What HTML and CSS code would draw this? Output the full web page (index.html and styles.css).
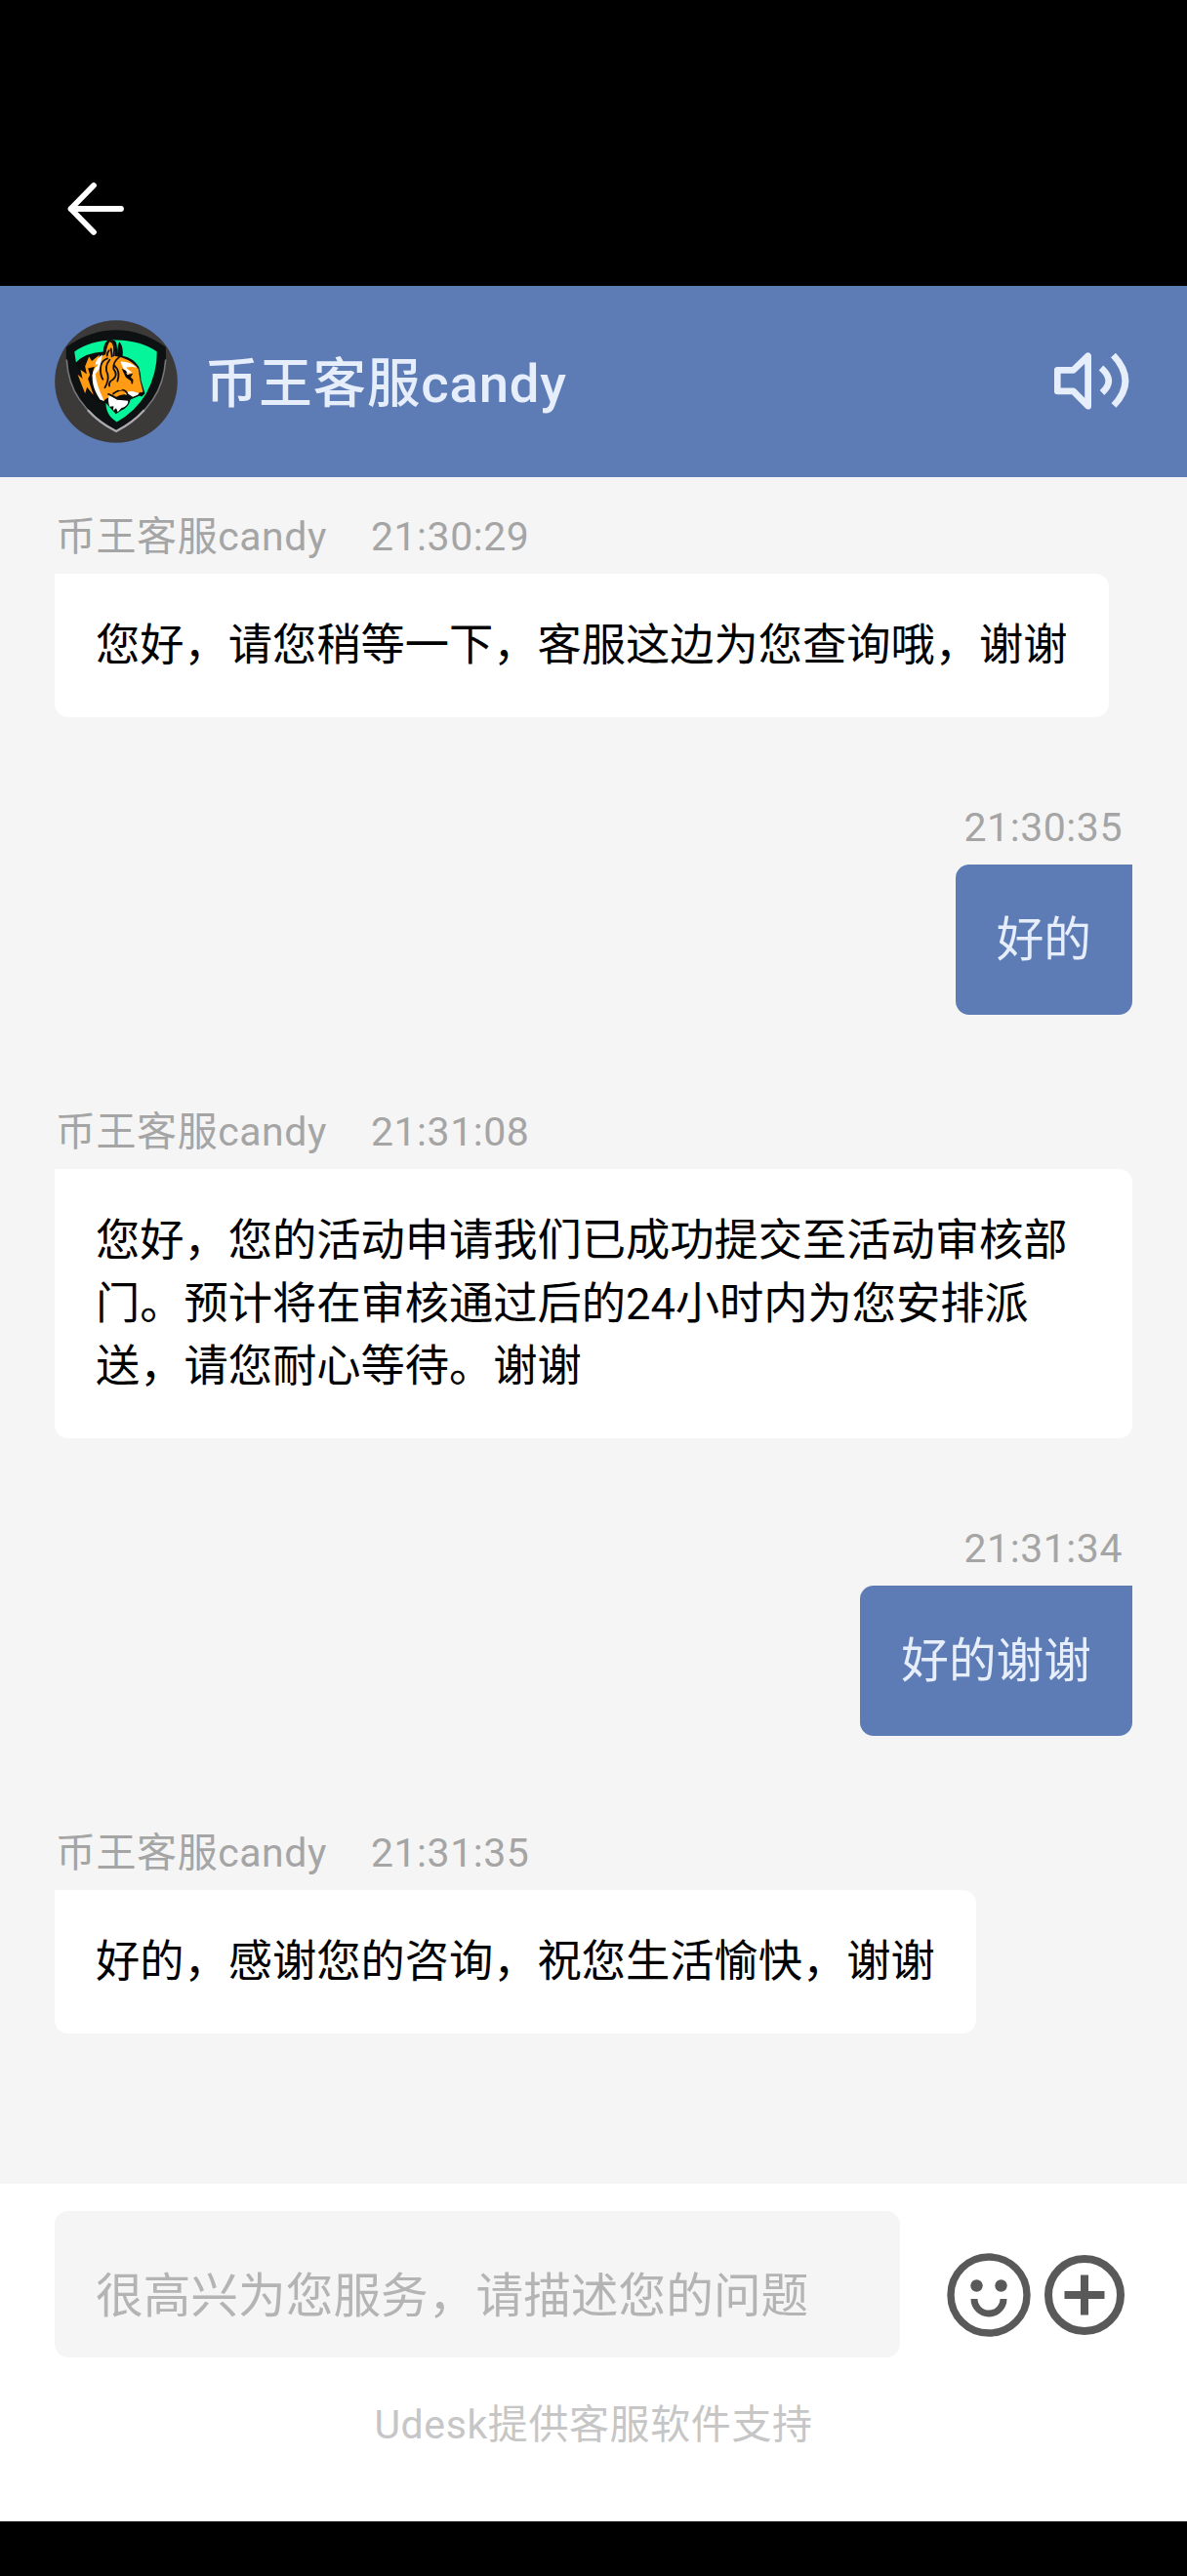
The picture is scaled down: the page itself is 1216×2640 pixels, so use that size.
FILE: index.html
```html
<!DOCTYPE html>
<html lang="zh-CN">
<head>
<meta charset="utf-8">
<title>币王客服candy</title>
<link rel="stylesheet" href="styles.css">
</head>
<body>
<div class="screen">
  <nav class="navbar">
    <svg class="back" viewBox="0 0 64 60" fill="none" stroke="#fff" stroke-width="5.8" stroke-linecap="round" stroke-linejoin="round"><path d="M32 6 8.500 30 32 54M8.500 30H60"/></svg>
  </nav>
  <header class="header">
    <svg class="avatar" viewBox="48 53 380 380">
      <circle cx="238" cy="243" r="189.500" fill="#3b3a39"/>
      <path d="M84 137Q155 84 238 84Q320 84 391 137Q398 225 355 297Q315 360 238 400Q160 360 121 297Q78 225 84 137Z" fill="#0e1112"/>
      <path d="M85 175Q89 247 124 298Q164 358 238 397Q312 358 352 298Q386 247 391 175" fill="none" stroke="#77757a" stroke-width="5"/>
      <path d="M150 331Q184 369 238 397Q291 369 325 331" fill="none" stroke="#aaa8ad" stroke-width="7"/>
      <path d="M109 151Q160 114 238 115Q317 117 364 151Q365 216 331 280Q298 335 240 368Q202 345 207 302L208 200L195 155Q140 158 114 184Z" fill="#05f59a"/>
      <path d="M114 184Q145 153 198 151Q200 118 219 112L235 118Q242 126 241 158Q242 125 249 121Q261 138 258 164Q292 171 308 198Q314 217 315 240L327 280L282 299Q278 323 253 333L237 343L207 310L190 306L160 294Z" fill="#0b0d0d"/>
      <path d="M202 159Q203 125 219 113Q239 123 233 164L256 169Q292 181 307 205Q310 239 321 275L286 292Q265 275 237 291Q212 289 199 303Q176 280 164 224Q171 178 202 159Z" fill="#ff9c13"/>
      <path d="M154 166L163 180L187 160L176 196L151 202L157 222L151 235L168 285L148 260L142 280L119 221L134 234L128 207L147 220L142 196Z" fill="#ff9c13"/>
      <path d="M196 160Q176 170 173 193Q184 185 181 193Q161 208 165 239Q166 264 188 299L201 303Q176 253 174 220Q192 200 190 185Z" fill="#fff"/>
      <path d="M252 181Q280 180 302 200Q284 195 268 200L288 216L276 217Q258 208 252 181ZM265 280Q279 268 300 277L314 281L287 291Z" fill="#fff"/>
      <path d="M216 284L239 298L275 301Q277 319 254 325L243 337L238 325L229 333L230 319L218 321Q211 303 216 284Z" fill="#fff"/>
      <g fill="none" stroke="#101010" stroke-width="5.5" stroke-linecap="round" stroke-linejoin="round">
        <path d="M203 158Q208 123 219 116Q238 126 230 163"/>
        <path d="M211 172Q192 178 190 200Q188 222 197 236M218 176Q200 198 212 221Q216 240 203 262M247 168Q228 182 230 204Q245 222 228 237Q214 244 217 257M234 195Q252 212 242 242M276 227L288 238L287 248M229 281Q263 256 274 284L286 291M214 282Q235 291 242 297L276 300"/>
        <path d="M210 163Q211 151 216 147M222 142L225 166"/>
      </g>
      <path d="M255 203L268 209L275 222L290 218L282 231L289 245L268 230ZM311 276L327 280L317 290L305 284Z" fill="#080808"/>
      <path d="M268 216L277 218L274 223Z" fill="#fff"/>
      <path d="M237 264Q248 257 259 267L249 271Z" fill="#ff9c13"/>
    </svg>
    <h1 class="title">币王客服candy</h1>
    <svg class="sound" viewBox="0 0 80 64" fill="none" stroke="#e6edfb" stroke-width="6.800">
      <path d="M3.200 20.400H19.500L34.600 5.800V57.200L19.500 41.800H3.200Z" stroke-linejoin="round"/>
      <path d="M48 18Q63 31 49 43.500M60.500 5Q85 31 61 56.500"/>
    </svg>
  </header>
  <main class="chat">
    <section class="message agent">
      <div class="meta"><span>币王客服candy</span><time>21:30:29</time></div>
      <p class="bubble">您好，请您稍等一下，客服这边为您查询哦，谢谢</p>
    </section>
    <section class="message me">
      <div class="meta"><time>21:30:35</time></div>
      <p class="bubble">好的</p>
    </section>
    <section class="message agent">
      <div class="meta"><span>币王客服candy</span><time>21:31:08</time></div>
      <p class="bubble wide">您好，您的活动申请我们已成功提交至活动审核部<br>门。预计将在审核通过后的24小时内为您安排派<br>送，请您耐心等待。谢谢</p>
    </section>
    <section class="message me">
      <div class="meta"><time>21:31:34</time></div>
      <p class="bubble">好的谢谢</p>
    </section>
    <section class="message agent">
      <div class="meta"><span>币王客服candy</span><time>21:31:35</time></div>
      <p class="bubble">好的，感谢您的咨询，祝您生活愉快，谢谢</p>
    </section>
  </main>
  <footer class="composer">
    <div class="row">
      <div class="input">很高兴为您服务，请描述您的问题</div>
      <div class="tools">
        <svg class="smile" viewBox="0 0 86 86"><circle cx="43" cy="43" r="39" fill="none" stroke="#595959" stroke-width="7.400"/><circle cx="30.500" cy="33.500" r="6.200" fill="#595959"/><circle cx="55.500" cy="33.500" r="6.200" fill="#595959"/><path d="M28 47A15 15 0 0 0 58 47" fill="none" stroke="#595959" stroke-width="7"/></svg>
        <svg class="plus" viewBox="0 0 82 82" fill="none" stroke="#595959" stroke-width="8"><circle cx="41" cy="41" r="37"/><path d="M20.500 41H61.500M41 20.500V61.500"/></svg>
      </div>
    </div>
    <p class="credit">Udesk提供客服软件支持</p>
  </footer>
  <div class="system-bar"></div>
</div>
</body>
</html>
```
FILE: styles.css
```css
* { box-sizing: border-box; }
body { margin: 0; background: #000; font-family: Roboto, "Noto Sans CJK SC", sans-serif; }
h1, p { margin: 0; }
svg { display: block; flex: none; }

.screen { width: 1216px; height: 2640px; display: flex; flex-direction: column; }

.navbar { height: 293px; padding: 184px 0 0 64px; background: #000; }
.back { width: 64px; height: 60px; }

.header { height: 196px; display: flex; align-items: center; padding: 0 56px; background: #5d7bb5; }
.avatar { width: 126px; height: 126px; }
.title { flex: 1; margin-left: 28px; padding-top: 4px; font-size: 54.500px; line-height: 72px; font-weight: 500; letter-spacing: .8px; color: #e6edfb; }
.sound { width: 80px; height: 64px; }

.chat { height: 1749px; padding: 29px 56px 0; background: #f5f5f5; }
.message { display: flex; flex-direction: column; align-items: flex-start; }
.meta { display: flex; gap: 45px; padding: 0 1px; margin-bottom: 6px; font-size: 41px; line-height: 64px; letter-spacing: .55px; color: #a5a5a5; }
.bubble { padding: 42px 42px 40.500px; background: #fff; border-radius: 0 14px 14px 14px; font-size: 45.250px; line-height: 64.500px; color: #000; white-space: nowrap; }
.bubble.wide { width: 100%; }
.agent { margin-bottom: 81px; }
.me { align-items: flex-end; margin-bottom: 88px; }
.me .meta { padding: 0 10px; }
.me .bubble { padding: 43px 42px 0; height: 154px; background: #5d7bb5; border-radius: 14px 0 14px 14px; font-size: 48.700px; line-height: 70px; color: #e6edfb; }

.composer { height: 346px; padding: 28px 56px 0; background: #fff; }
.row { display: flex; justify-content: space-between; }
.input { width: 866px; height: 150px; padding: 52px 42px 0; border-radius: 14px; background: #f5f5f5; font-size: 48.700px; line-height: 72px; color: #b4b4b4; white-space: nowrap; }
.tools { display: flex; align-items: center; gap: 14px; padding: 22px 8px 0 0; }
.smile { width: 86px; height: 86px; }
.plus { width: 82px; height: 82px; }
.credit { margin-top: 37px; text-align: center; font-size: 41px; line-height: 64px; letter-spacing: .6px; color: #c6c6c6; }

.system-bar { flex: 1; background: #000; }
```
